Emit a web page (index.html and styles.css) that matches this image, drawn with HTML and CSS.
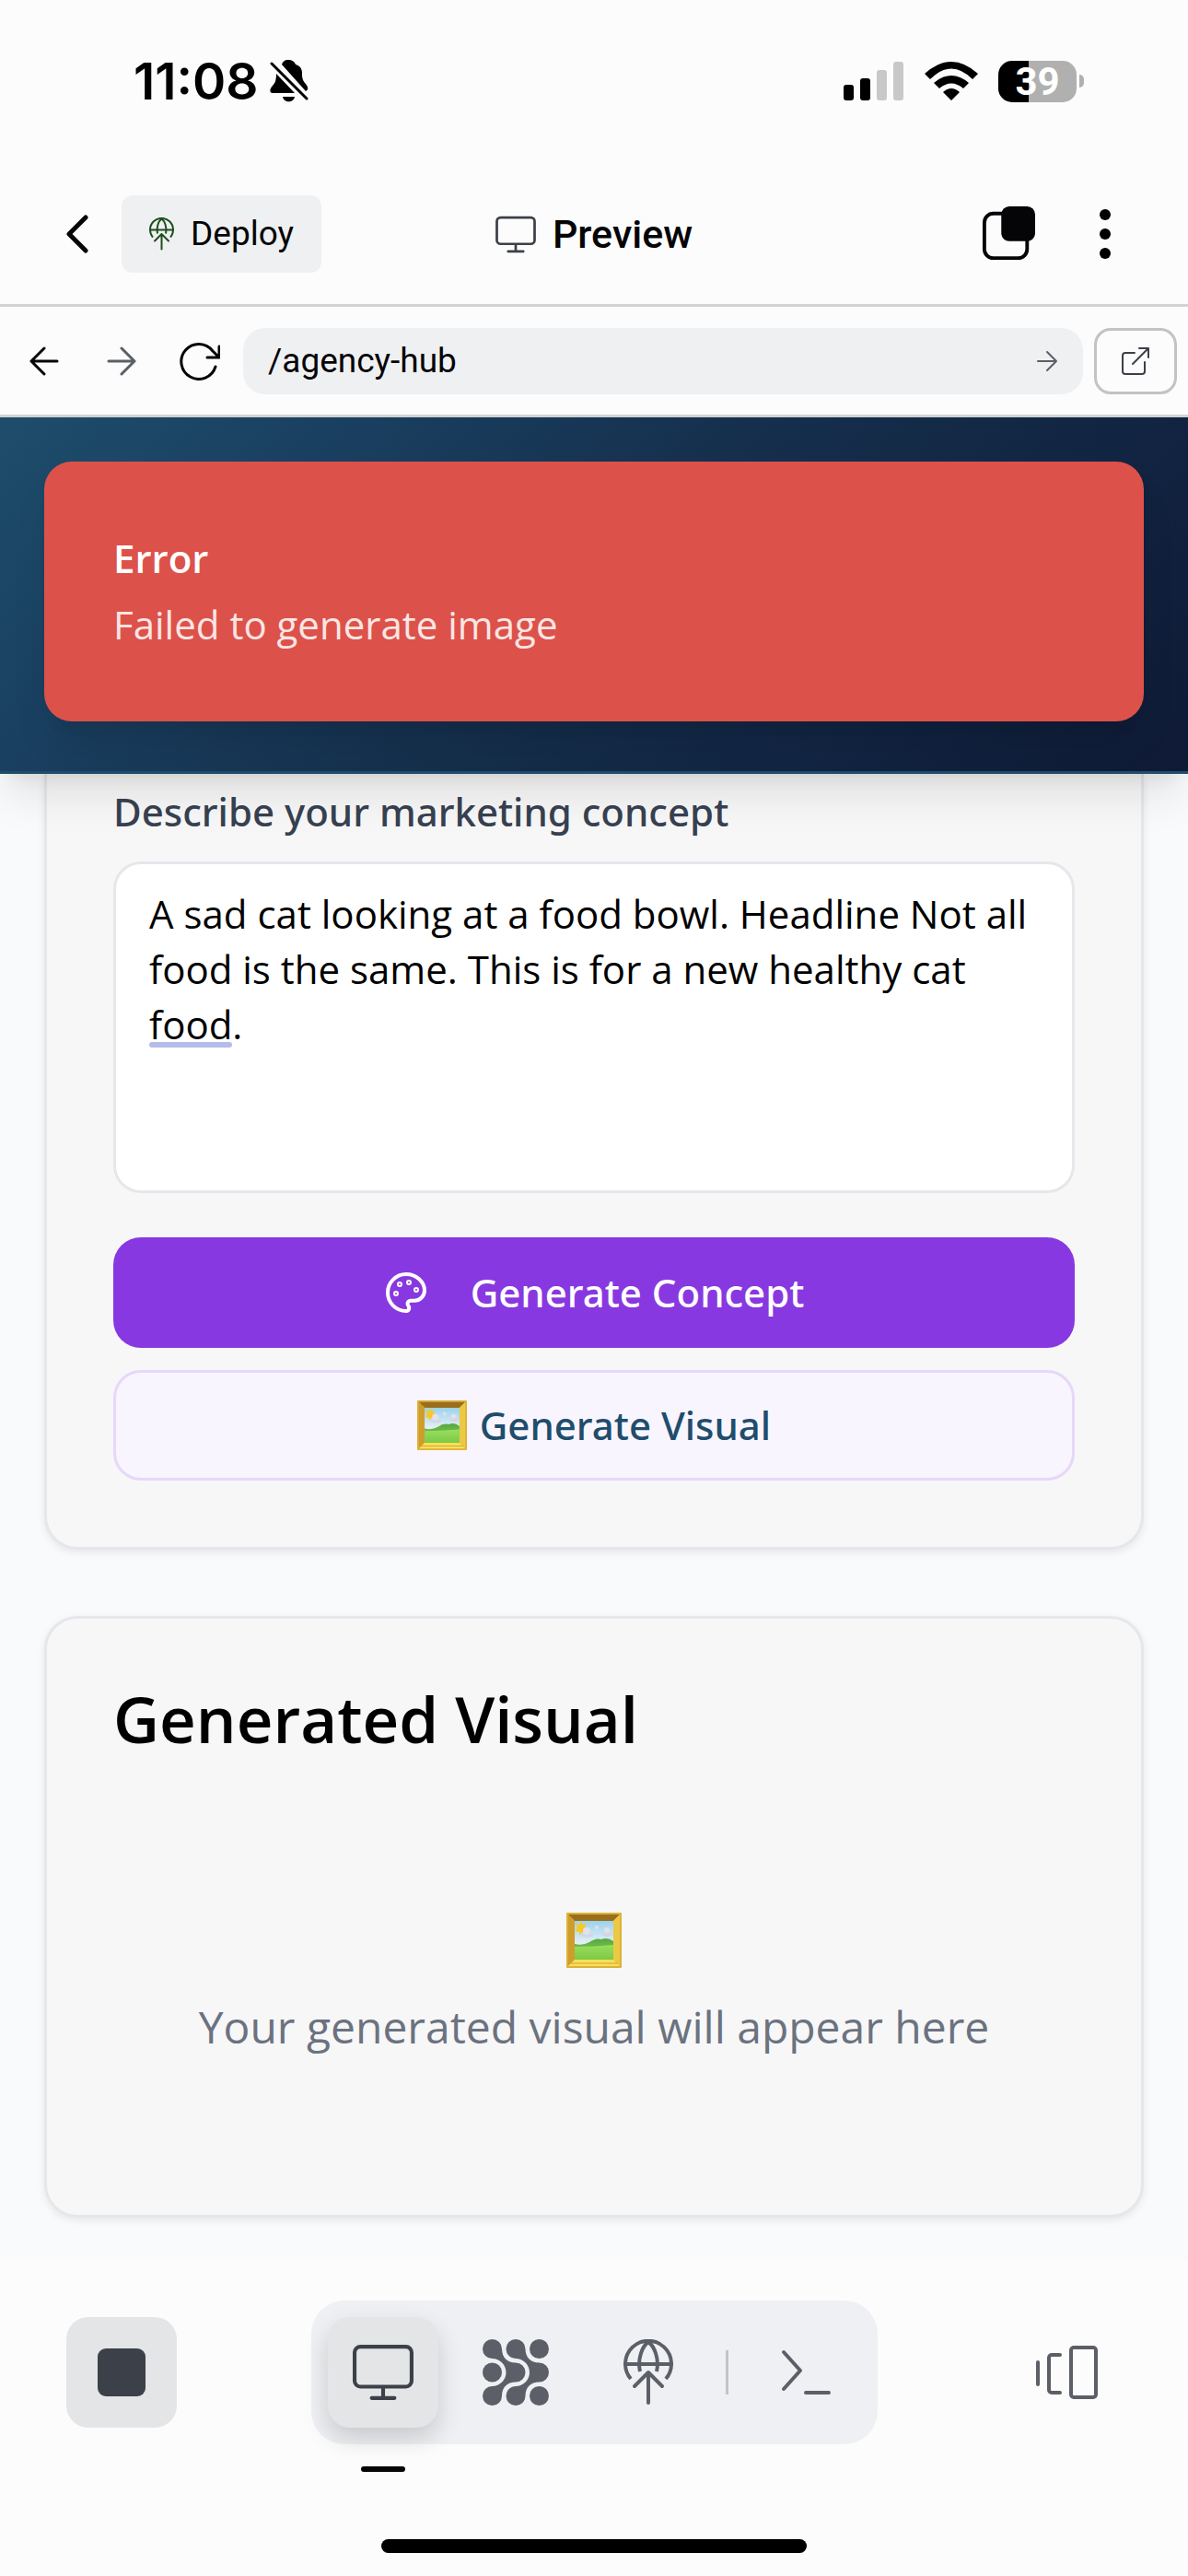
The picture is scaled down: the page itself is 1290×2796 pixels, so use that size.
FILE: index.html
```html
<!DOCTYPE html>
<html lang="en">
<head>
<meta charset="utf-8">
<meta name="viewport" content="width=device-width, initial-scale=1">
<title>Preview</title>
<link rel="stylesheet" href="styles.css">
</head>
<body>
<svg class="defs" aria-hidden="true">
  <defs>
    <linearGradient id="sky" x1="0" y1="0" x2="0" y2="1"><stop offset="0" stop-color="#9bd3ee"/><stop offset="0.7" stop-color="#f2f5f6"/></linearGradient>
    <linearGradient id="grass" x1="0" y1="0" x2="0" y2="1"><stop offset="0" stop-color="#55a83e"/><stop offset="1" stop-color="#93d65a"/></linearGradient>
    <linearGradient id="lawn" x1="0" y1="0" x2="0" y2="1"><stop offset="0" stop-color="#9ade5e"/><stop offset="1" stop-color="#7cc946"/></linearGradient>
    <symbol id="frame" viewBox="0 0 60 60">
      <rect x="0" y="0" width="60" height="60" rx="1" fill="#dcb13a"/>
      <path d="M2 2h56l-7 7H9z" fill="#9a6f1b"/>
      <path d="M2 2l7 7v42l-7 7z" fill="#cf9d2c"/>
      <path d="M58 2l-7 7v42l7 7z" fill="#ecc943"/>
      <path d="M2 58l7-7h42l7 7z" fill="#f8df58"/>
      <path d="M4 55h52" stroke="#cfa331" stroke-width="1"/>
      <rect x="9" y="9" width="42" height="42" fill="url(#sky)"/>
      <circle cx="16" cy="17" r="5" fill="#f5c92c"/>
      <path d="M10 12l2 1M16 10v2M21 12l-1 1M10 20l2-1M15 24v-2" stroke="#f5c92c" stroke-width="2"/>
      <ellipse cx="22" cy="24" rx="7" ry="3" fill="#d3d7e4"/><circle cx="22" cy="20" r="4" fill="#e0e2ec"/>
      <circle cx="33" cy="16" r="2" fill="#e0e2ec"/>
      <ellipse cx="45" cy="23" rx="6" ry="3" fill="#d3d7e4"/><circle cx="44" cy="19" r="3" fill="#e0e2ec"/>
      <path d="M9 34q9 2 16-2q7-5 13-3q7-3 13 2v20H9z" fill="url(#grass)"/>
      <path d="M9 37q22 0 42-2v16H9z" fill="url(#lawn)"/>
    </symbol>
    <symbol id="monitor" viewBox="0 0 64 60">
      <path d="M8 3h48a6 6 0 0 1 6 6v30a6 6 0 0 1-6 6H8a6 6 0 0 1-6-6V9a6 6 0 0 1 6-6zM32 45v12M20 57h24" fill="none" stroke="currentColor" stroke-width="4" stroke-linecap="round"/>
    </symbol>
    <symbol id="deploy" viewBox="0 0 54 72">
      <g fill="none" stroke="currentColor" stroke-width="4" stroke-linecap="round" stroke-linejoin="round">
        <path d="M8 43a25 25 0 1 1 38 0" stroke-linecap="butt"/>
        <path d="M2 27h50"/>
        <path d="M18 35C15 22 20 8 27 3c7 5 12 19 9 32" stroke-linecap="butt"/>
        <path d="M27 69V36M12 51l15-15 15 15"/>
      </g>
    </symbol>
  </defs>
</svg>

<div class="status">
  <div class="status-left">
    <span class="time">11:08</span>
    <svg class="bell" viewBox="0 0 42 46" aria-label="Silent">
      <path d="M20 0c-4 0-6 2-7 5l26 29c4-2 2-6-1-9c-3-4-3-7-3-11c0-5-3-8-7-9c-1-3-4-5-8-5z" fill="#000"/>
      <path d="M7 15c0 6-1 10-4 13c-3 3-4 8 0 8h24z" fill="#000"/>
      <path d="M14 40h13c-1 7-12 7-13 0z" fill="#000"/>
      <path d="M2 4l38 38" stroke="#000" stroke-width="3" stroke-linecap="round"/>
    </svg>
  </div>
  <div class="status-right">
    <svg class="signal" viewBox="0 0 66 42" aria-label="Signal"><rect x="0" y="25" width="11" height="17" rx="3"/><rect x="18" y="18" width="11" height="24" rx="3"/><rect x="36" y="9" width="11" height="33" rx="3" fill="#c8c8c8"/><rect x="54" y="0" width="11" height="42" rx="3" fill="#c8c8c8"/></svg>
    <svg class="wifi" viewBox="0 0 58 42" aria-label="Wi-Fi"><path d="M29 42l-9-9q9-8 18 0zM16 29l-6-6q19-16 38 0l-6 6q-13-11-26 0zM6 19l-6-6Q29-13 58 13l-6 6Q29-4 6 19z"/></svg>
    <div class="battery"><span class="battery-body">39</span><i class="battery-tip"></i></div>
  </div>
</div>

<header class="appbar">
  <div class="appbar-side">
    <button class="plain" aria-label="Back"><svg width="24" height="42" viewBox="0 0 24 42"><path d="M21 3L3 21l18 18" class="line w5"/></svg></button>
    <button class="deploy"><svg class="green" width="27" height="36"><use href="#deploy"/></svg>Deploy</button>
  </div>
  <h1 class="appbar-title"><svg class="slate" width="44" height="41"><use href="#monitor"/></svg>Preview</h1>
  <div class="appbar-side end">
    <button class="plain" aria-label="Tabs"><svg width="58" height="60" viewBox="0 0 60 62"><rect x="3" y="8" width="48" height="50" rx="10" class="line w4"/><rect x="22" y="0" width="38" height="39" rx="9" fill="#050507"/></svg></button>
    <button class="more" aria-label="More"><svg width="12" height="54" viewBox="0 0 12 54"><circle cx="6" cy="6" r="6"/><circle cx="6" cy="27" r="6"/><circle cx="6" cy="48" r="6"/></svg></button>
  </div>
</header>

<nav class="urlbar">
  <button class="nav-btn" aria-label="Go back"><svg width="32" height="32" viewBox="0 0 32 32"><path d="M30 16H2M16 2L2 16l14 14" class="line w3"/></svg></button>
  <button class="nav-btn grey" aria-label="Go forward"><svg width="32" height="32" viewBox="0 0 32 32"><path d="M2 16h28M16 2l14 14-14 14" class="line w3"/></svg></button>
  <button class="nav-btn" aria-label="Reload"><svg width="46" height="42" viewBox="-3 0 46 42"><path d="M38 27A19 19 0 1 1 35 10l7 7M42 5v12H29" class="line w3"/></svg></button>
  <div class="field">
    <input class="url" type="text" value="/agency-hub" aria-label="Path">
    <button class="plain grey" aria-label="Go"><svg width="24" height="24" viewBox="0 0 24 24"><path d="M2 12h20M12 2l10 10-10 10" class="line w2"/></svg></button>
  </div>
  <a class="external" href="#" aria-label="Open in new tab"><svg width="32" height="32" viewBox="0 0 32 32"><path d="M15 7H5a3 3 0 0 0-3 3v17a3 3 0 0 0 3 3h18a3 3 0 0 0 3-3V17M20 2h10v10M30 2L13 19" class="line w2"/></svg></a>
</nav>

<main class="page">
  <div class="hero">
    <div class="toast" role="alert">
      <strong class="toast-title">Error</strong>
      <p class="toast-text">Failed to generate image</p>
    </div>
  </div>

  <div class="content">
    <section class="card form">
      <label class="label" for="concept">Describe your marketing concept</label>
      <div class="editor">
        <textarea id="concept" class="textarea" spellcheck="false">A sad cat looking at a food bowl. Headline Not all food is the same. This is for a new healthy cat food.</textarea>
        <i class="hint"></i>
      </div>
      <button class="btn primary"><svg width="48" height="48" viewBox="0 0 24 24" fill="none" stroke="#fff" stroke-width="2" stroke-linecap="round" stroke-linejoin="round"><circle cx="13.5" cy="6.5" r=".5"/><circle cx="17.5" cy="10.5" r=".5"/><circle cx="8.5" cy="7.5" r=".5"/><circle cx="6.5" cy="12.5" r=".5"/><path d="M12 2C6.500 2 2 6.500 2 12s4.500 10 10 10c.926 0 1.648-.746 1.648-1.688 0-.437-.18-.835-.437-1.125-.29-.289-.438-.652-.438-1.125a1.640 1.640 0 0 1 1.668-1.668h1.996c3.051 0 5.555-2.503 5.555-5.554C21.965 6.012 17.461 2 12 2z"/></svg>Generate Concept</button>
      <button class="btn secondary"><svg width="54" height="54"><use href="#frame"/></svg>Generate Visual</button>
    </section>

    <section class="card result">
      <h2 class="card-title">Generated Visual</h2>
      <div class="empty">
        <svg width="60" height="60"><use href="#frame"/></svg>
        <p class="empty-text">Your generated visual will appear here</p>
      </div>
    </section>
  </div>
</main>

<footer class="dock">
  <div class="dock-row">
    <button class="tool filled" aria-label="Stop"><svg width="54" height="54"><rect x="1" y="1" width="52" height="52" rx="9" fill="#3c4049"/></svg></button>
    <div class="tools">
      <button class="tool filled active" aria-label="Preview"><svg class="slate" width="66" height="62"><use href="#monitor"/></svg></button>
      <button class="tool" aria-label="Agent"><svg width="72" height="72" viewBox="0 0 72 72" fill="#5c5f67">
        <path id="flow" d="M10.500 0A10.500 10.500 0 0 1 21 10.500C21 20 27 25.500 36 25.500A10.500 10.500 0 0 1 36 46.500C27 46.500 21 52 21 61.500A10.500 10.500 0 1 1 10.500 51C19 51 25.500 44 25.500 36S19 21 10.500 21A10.500 10.500 0 0 1 10.500 0z"/>
        <use href="#flow" x="25.500"/>
        <circle cx="61.500" cy="10.500" r="10.500"/><circle cx="10.500" cy="36" r="10.500"/><circle cx="61.500" cy="61.500" r="10.500"/></svg></button>
      <button class="tool" aria-label="Deployments"><svg width="54" height="72"><use href="#deploy"/></svg></button>
      <i class="divider"></i>
      <button class="tool" aria-label="Shell"><svg width="54" height="50" viewBox="0 0 54 50"><path d="M3 3l18 20L3 43M27 47h25" class="line w4"/></svg></button>
    </div>
    <button class="tool" aria-label="Panels"><svg width="70" height="60" viewBox="0 0 70 60"><path d="M4 19v24M28 11H19a3 3 0 0 0-3 3v35a3 3 0 0 0 3 3h9M43 3h21a3 3 0 0 1 3 3v48a3 3 0 0 1-3 3H43a3 3 0 0 1-3-3V6a3 3 0 0 1 3-3z" class="line w4"/></svg></button>
  </div>
  <i class="home"></i>
</footer>
</body>
</html>
```
FILE: styles.css
```css
* { box-sizing: border-box; }

body {
  margin: 0;
  min-height: 100vh;
  display: flex;
  flex-direction: column;
  background: #fcfcfc;
  color: #050507;
  font-family: "Open Sans", "Noto Sans", sans-serif;
  font-size: 42px;
  line-height: 60px;
}

h1, h2, p { margin: 0; }
button, input, textarea { font: inherit; color: inherit; border: 0; background: none; padding: 0; }
svg { display: block; flex: none; }
i { display: block; }

.defs { position: absolute; width: 0; height: 0; }

.line { fill: none; stroke: currentColor; stroke-linecap: round; stroke-linejoin: round; }
.w2 { stroke-width: 2; }
.w3 { stroke-width: 3; }
.w4 { stroke-width: 4; }
.w5 { stroke-width: 5; }
.green { color: #1c4f1c; }
.slate { color: #3c4049; }
.grey { color: #5c5f67; }

/* Device status bar */
.status {
  display: flex;
  justify-content: space-between;
  align-items: center;
  height: 176px;
  padding: 0 113px 0 145px;
  color: #000;
  font-family: Inter, sans-serif;
}
.status-left, .status-right { display: flex; align-items: center; }
.status-left { gap: 12px; }
.status-right { gap: 22px; }
.time { font-size: 55px; font-weight: 600; }
.bell { width: 42px; height: 46px; }
.signal { width: 66px; height: 42px; }
.wifi { width: 58px; height: 42px; }
.battery { display: flex; align-items: center; gap: 3px; }
.battery-body {
  width: 85px;
  height: 45px;
  border-radius: 15px;
  background: linear-gradient(90deg, #000 39%, #b0b0b0 39%);
  color: #fff;
  font-family: Roboto, sans-serif;
  font-size: 42px;
  font-weight: 700;
  line-height: 45px;
  text-align: center;
}
.battery-tip { width: 5px; height: 14px; border-radius: 0 5px 5px 0; background: #b0b0b0; }

/* App bar */
.appbar {
  display: grid;
  grid-template-columns: 1fr auto 1fr;
  align-items: center;
  height: 157px;
  padding: 2px 72px 0;
  border-bottom: 3px solid #d2d3d3;
  font-family: Roboto, sans-serif;
}
.appbar-side { display: flex; align-items: center; gap: 36px; }
.end { justify-content: flex-end; gap: 70px; }
.more { padding-right: 12px; }
.appbar-title { display: flex; align-items: center; gap: 18px; font-size: 43px; font-weight: 500; }
.deploy {
  display: flex;
  align-items: center;
  gap: 18px;
  height: 84px;
  padding: 0 30px;
  border-radius: 12px;
  background: #eff0f2;
  font-size: 37px;
}

/* Address bar */
.urlbar {
  display: flex;
  align-items: center;
  height: 120px;
  padding: 0 12px 0 6px;
  border-bottom: 3px solid #d2d3d3;
  font-family: Roboto, sans-serif;
}
.nav-btn { display: flex; justify-content: center; width: 84px; }
.field {
  display: flex;
  flex: 1;
  align-items: center;
  height: 72px;
  margin: 0 12px 0 6px;
  padding: 0 27px;
  border-radius: 24px;
  background: #eff0f2;
}
.url { flex: 1; min-width: 0; font-size: 37px; }
.external {
  display: flex;
  align-items: center;
  justify-content: center;
  width: 90px;
  height: 72px;
  border: 3px solid #c0c4c3;
  border-radius: 18px;
  color: #3c4049;
}

/* Previewed page */
.page { background: #f9fafc; }
.hero {
  position: relative;
  z-index: 1;
  padding: 48px 48px 54px;
  border-bottom: 3px solid #1f4d6c;
  background: linear-gradient(135deg, #1e4d6b 0%, #1a4061 22%, #152f4c 50%, #112340 78%, #0f1a35 100%);
  box-shadow: 0 30px 45px -9px rgba(0, 0, 0, 0.1), 0 12px 18px -12px rgba(0, 0, 0, 0.1);
}
.toast {
  padding: 75px;
  border-radius: 30px;
  background: #dc524a;
  box-shadow: 0 30px 45px -9px rgba(0, 0, 0, 0.1), 0 12px 18px -12px rgba(0, 0, 0, 0.1);
  color: #fff;
}
.toast-title { display: block; margin-bottom: 12px; font-weight: 600; }
.toast-text { color: #fbe5e4; }

.content { display: flex; flex-direction: column; gap: 72px; padding: 0 48px 46px; }
.card {
  padding: 72px;
  border: 3px solid #e5e7eb;
  border-radius: 36px;
  background: #f7f7f7;
  box-shadow: 0 3px 9px rgba(0, 0, 0, 0.08);
}
.form {
  display: flex;
  flex-direction: column;
  gap: 24px;
  padding-top: 11px;
  border-top: 0;
  border-radius: 0 0 36px 36px;
}
.label { color: #374151; font-family: "Noto Sans", sans-serif; font-weight: 500; }
.editor { position: relative; margin-bottom: 24px; }
.textarea {
  display: block;
  width: 100%;
  height: 360px;
  padding: 24px 36px;
  border: 3px solid #e5e7eb;
  border-radius: 30px;
  background: #fff;
  color: #000;
  resize: none;
}
.hint { position: absolute; left: 39px; top: 196px; width: 90px; height: 6px; border-radius: 3px; background: #b4bdea; }
.btn {
  display: flex;
  align-items: center;
  justify-content: center;
  height: 120px;
  border-radius: 30px;
  font-family: "Noto Sans", sans-serif;
  font-weight: 500;
}
.primary { gap: 46px; background: #8838e0; color: #fff; }
.secondary { gap: 14px; border: 3px solid #e7d7fb; background: #f8f5fe; color: #1f4d6c; }

.result { padding-bottom: 168px; }
.card-title { font-size: 69px; font-weight: 600; line-height: 72px; color: #000; }
.empty { display: flex; flex-direction: column; align-items: center; gap: 28px; padding-top: 175px; }
.empty-text { font-size: 48px; line-height: 72px; color: #6b7280; }

/* Bottom dock */
.dock { padding: 44px 72px 24px; color: #5c5f67; }
.dock-row { display: grid; grid-template-columns: 1fr auto 1fr; align-items: center; }
.dock-row > :last-child { justify-self: end; }
.tools { display: flex; align-items: center; gap: 24px; padding: 18px; border-radius: 36px; background: #eff0f3; }
.tool { position: relative; display: flex; align-items: center; justify-content: center; width: 120px; height: 120px; border-radius: 24px; }
.filled { background: #e4e5e7; }
.active { box-shadow: 0 12px 27px rgba(0, 0, 0, 0.16); }
.active::after { content: ""; position: absolute; left: 36px; bottom: -48px; width: 48px; height: 6px; border-radius: 3px; background: #050507; }
.divider { width: 3px; height: 48px; background: #c2c4c8; }
.home { width: 462px; height: 15px; margin: 103px auto 0; border-radius: 8px; background: #000; }
```
